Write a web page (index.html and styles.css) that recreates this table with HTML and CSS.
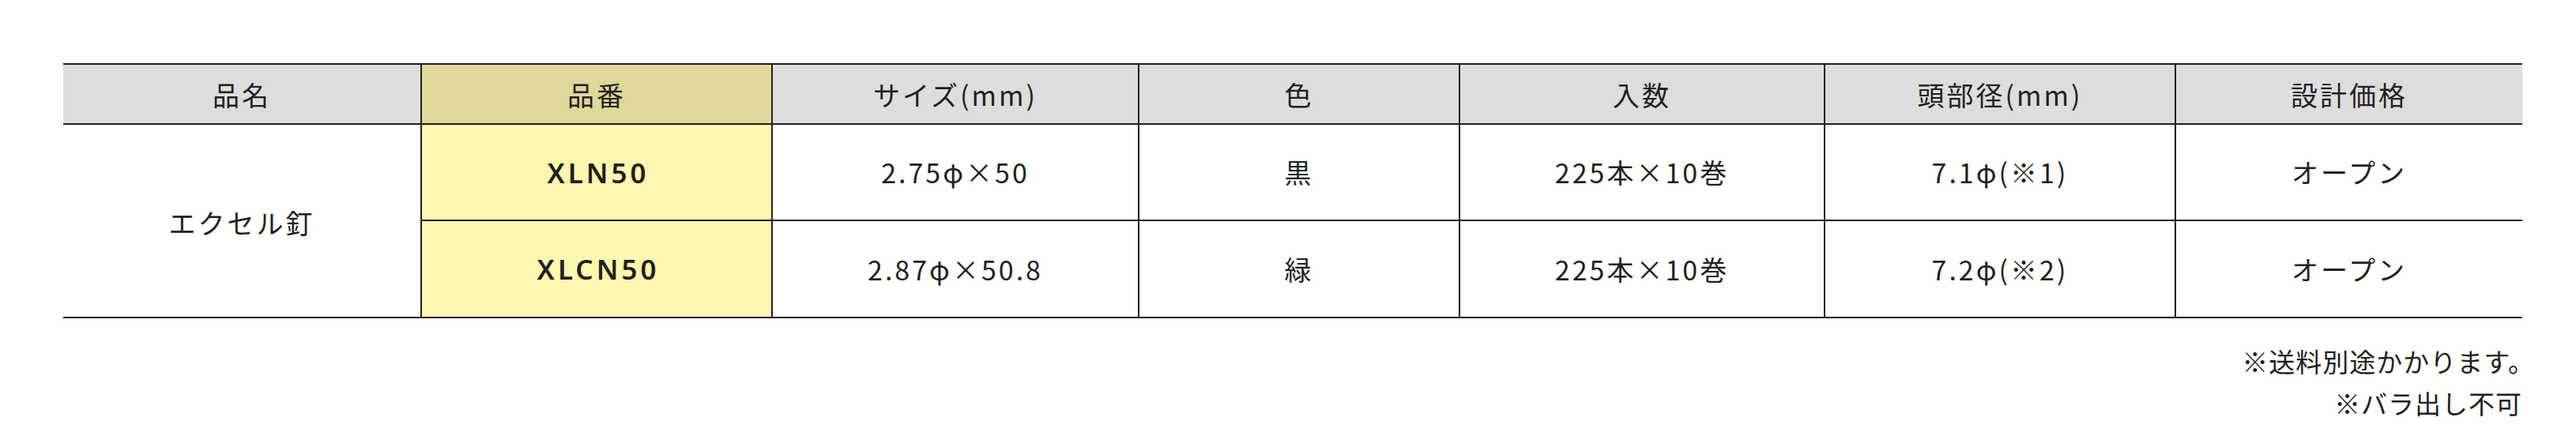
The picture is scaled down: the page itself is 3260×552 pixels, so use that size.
FILE: index.html
```html
<!DOCTYPE html>
<html lang="ja">
<head>
<meta charset="utf-8">
<title>エクセル釘</title>
<link rel="stylesheet" href="styles.css">
</head>
<body>
<div class="page">
  <div class="spec">
    <div class="cell head">品名</div>
    <div class="cell head code-head">品番</div>
    <div class="cell head">サイズ(mm)</div>
    <div class="cell head">色</div>
    <div class="cell head">入数</div>
    <div class="cell head">頭部径(mm)</div>
    <div class="cell head">設計価格</div>

    <div class="cell name">エクセル釘</div>
    <div class="cell code r1">XLN50</div>
    <div class="cell r1">2.75φ×50</div>
    <div class="cell r1">黒</div>
    <div class="cell r1">225本×10巻</div>
    <div class="cell r1">7.1φ(※1)</div>
    <div class="cell r1">オープン</div>

    <div class="cell code r2">XLCN50</div>
    <div class="cell r2">2.87φ×50.8</div>
    <div class="cell r2">緑</div>
    <div class="cell r2">225本×10巻</div>
    <div class="cell r2">7.2φ(※2)</div>
    <div class="cell r2">オープン</div>
  </div>
  <div class="notes">
    <p class="note note-first">※送料別途かかります。</p>
    <p class="note">※バラ出し不可</p>
  </div>
</div>
</body>
</html>
```

FILE: styles.css
```css
html, body {
  margin: 0;
  padding: 0;
  background: #ffffff;
}

body {
  font-family: "Noto Sans CJK JP", "Noto Sans", sans-serif;
  color: #231f20;
}

.page {
  padding: 80px 0 0 80px;
  width: 3112px;
}

.spec {
  display: grid;
  grid-template-columns: 452px 444px 464px 406px 462px 444px 440px;
  grid-template-rows: 76px 122px 121px;
  border-top: 2px solid #231f20;
  border-bottom: 2px solid #231f20;
}

.cell {
  box-sizing: border-box;
  display: flex;
  align-items: center;
  justify-content: center;
  font-size: 34px;
  letter-spacing: 3px;
  border-left: 2px solid #231f20;
  line-height: 1;
}

.head {
  background: #dcdddd;
  border-bottom: 2px solid #231f20;
  padding-top: 2px;
}

.head:first-child,
.name {
  border-left: none;
}

.code-head {
  background: #dfd89b;
}

.name {
  grid-row: 2 / span 2;
  grid-column: 1;
  padding-top: 4px;
}

.r1 {
  border-bottom: 2px solid #231f20;
}

.code {
  background: #fef7b0;
  font-family: "Noto Sans", "Noto Sans CJK JP", sans-serif;
  font-weight: 600;
  letter-spacing: 4px;
  font-size: 35px;
  padding-left: 4px;
}

.notes {
  text-align: right;
  padding-top: 28px;
}

.note {
  margin: 0;
  font-size: 33px;
  line-height: 53px;
  letter-spacing: 1px;
}

.note-first {
  margin-right: -16px;
}
```
